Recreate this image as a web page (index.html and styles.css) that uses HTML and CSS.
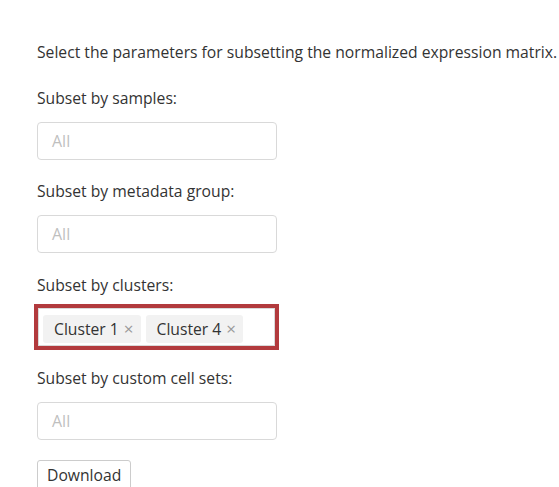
FILE: index.html
```html
<!DOCTYPE html>
<html>
<head>
<meta charset="utf-8">
<link rel="stylesheet" href="styles.css">
</head>
<body>
<div class="page">
  <p class="intro">Select the parameters for subsetting the normalized expression matrix.</p>
  <div class="group">
    <label class="label">Subset by samples:</label>
    <div class="select"><span class="placeholder">All</span></div>
  </div>
  <div class="group">
    <label class="label">Subset by metadata group:</label>
    <div class="select"><span class="placeholder">All</span></div>
  </div>
  <div class="group">
    <label class="label">Subset by clusters:</label>
    <div class="highlight">
      <div class="select select-tags">
        <span class="tag">Cluster 1 <span class="tag-x">×</span></span>
        <span class="tag">Cluster 4 <span class="tag-x">×</span></span>
      </div>
    </div>
  </div>
  <div class="group">
    <label class="label">Subset by custom cell sets:</label>
    <div class="select"><span class="placeholder">All</span></div>
  </div>
  <div><button class="btn">Download</button></div>
</div>
</body>
</html>
```

FILE: styles.css
```css
html, body {
  margin: 0;
  padding: 0;
  background: #ffffff;
}
body {
  font-family: "Open Sans", "Noto Sans", "Liberation Sans", sans-serif;
  font-size: 15.7px;
  color: #333333;
  overflow: hidden;
}
.page {
  padding: 40px 0 0 37px;
}
.intro {
  margin: 0 0 22px 0;
  line-height: 24px;
  white-space: nowrap;
}
.group {
  display: flex;
  flex-direction: column;
  align-items: flex-start;
  margin-bottom: 19.3px;
}
.label {
  line-height: 24px;
  margin-bottom: 12px;
}
.select {
  box-sizing: border-box;
  width: 240px;
  height: 38px;
  border: 1px solid #d9d9d9;
  border-radius: 4px;
  display: flex;
  align-items: center;
  padding: 0 14px;
}
.placeholder {
  color: #bfbfbf;
  font-size: 16px;
}
.highlight {
  border: 4px solid #b23a3d;
  margin: -5px 0 -3px -3px;
}
.highlight .select {
  width: 237px;
  border-radius: 0;
}
.select-tags {
  padding: 4px 4px 0 4px;
  gap: 5px;
}
.tag {
  background: #f2f2f2;
  border-radius: 3px;
  height: 28px;
  display: flex;
  align-items: center;
  padding: 0 7px 0 11px;
  color: #333;
}
.tag-x {
  color: #999;
  margin-left: 5px;
  font-size: 17px;
}
.btn {
  font-family: inherit;
  font-size: 15.7px;
  color: #333;
  background: #fff;
  border: 1px solid #cccccc;
  border-radius: 3px;
  padding: 2px 9px;
  height: 30px;
  margin-top: 1px;
}
```
